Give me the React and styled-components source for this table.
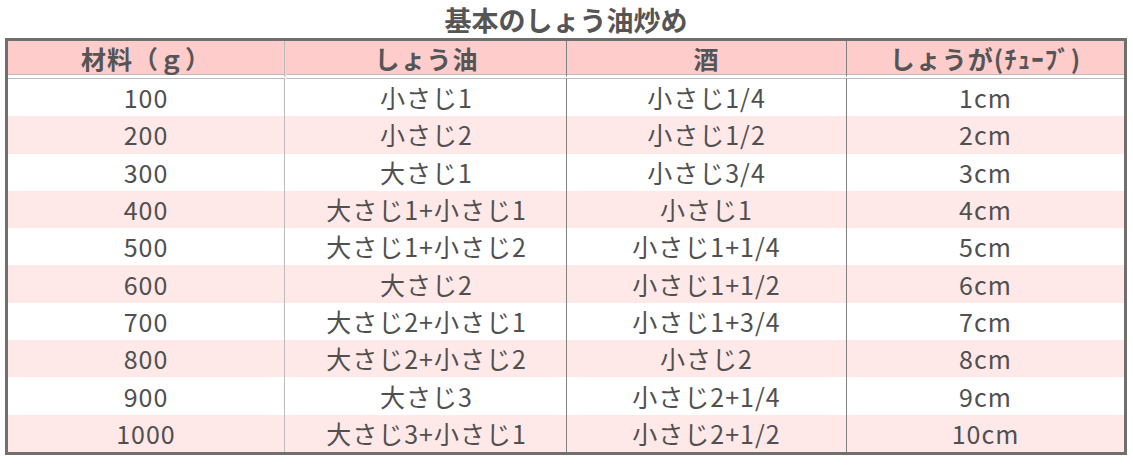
import React from "react";
import styled, { createGlobalStyle } from "styled-components";

const GlobalStyle = createGlobalStyle`
  body {
    margin: 0;
    background: #fff;
    font-family: "Noto Sans CJK JP", "Noto Sans", sans-serif;
    color: #555;
  }
`;

const Wrap = styled.div`
  width: 1122px;
  padding-left: 5px;
`;

const Title = styled.h2`
  margin: 0;
  height: 38px;
  line-height: 40px;
  text-align: center;
  font-size: 27px;
  font-weight: 700;
  color: #555;
`;

const Table = styled.table`
  width: 1122px;
  table-layout: fixed;
  border-collapse: separate;
  border-spacing: 0;
  border: 3px solid #6f6f6f;
`;

const Th = styled.th`
  height: 34px;
  padding: 0;
  background: #ffcccc;
  font-size: 25px;
  font-weight: 700;
  letter-spacing: 1px;
  color: #555;
  border-bottom: 3px solid #fff;
  box-shadow: inset 0 -1px 0 #bbb;
  line-height: 34px;
  white-space: nowrap;
  ${(p) => cellLines(p.col)}
`;

const Row = styled.tr`
  background: ${(p) => (p.even ? "#ffe8e8" : "#fff")};
`;

const Td = styled.td`
  height: 37.3px;
  padding: 0;
  text-align: center;
  font-size: 25px;
  letter-spacing: 1px;
  line-height: 37px;
  color: #505050;
  white-space: nowrap;
  ${(p) => (p.first ? "border-top: 1px solid #bbb;" : "")}
  ${(p) => cellLines(p.col)}
`;

function cellLines(col) {
  if (col === 0) return "border-right: 1px solid #bbb;";
  if (col === 1)
    return "border-left: 2px solid transparent; border-right: 1px solid #808080;";
  if (col === 2) return "border-right: 1px solid #808080;";
  return "";
}

const Col = styled.col`
  width: ${(p) => p.w}px;
`;

const rows = [
  ["100", "小さじ1", "小さじ1/4", "1cm"],
  ["200", "小さじ2", "小さじ1/2", "2cm"],
  ["300", "大さじ1", "小さじ3/4", "3cm"],
  ["400", "大さじ1+小さじ1", "小さじ1", "4cm"],
  ["500", "大さじ1+小さじ2", "小さじ1+1/4", "5cm"],
  ["600", "大さじ2", "小さじ1+1/2", "6cm"],
  ["700", "大さじ2+小さじ1", "小さじ1+3/4", "7cm"],
  ["800", "大さじ2+小さじ2", "小さじ2", "8cm"],
  ["900", "大さじ3", "小さじ2+1/4", "9cm"],
  ["1000", "大さじ3+小さじ1", "小さじ2+1/2", "10cm"],
];

const heads = ["材料（ｇ）", "しょう油", "酒", "しょうが(ﾁｭｰﾌﾞ)"];

export default function App() {
  return (
    <>
      <GlobalStyle />
      <Wrap>
        <Title>基本のしょう油炒め</Title>
        <Table>
          <colgroup>
            <Col w={277} />
            <Col w={282} />
            <Col w={280} />
            <Col w={277} />
          </colgroup>
          <thead>
            <tr>
              {heads.map((h, i) => (
                <Th key={h} col={i}>
                  {h}
                </Th>
              ))}
            </tr>
          </thead>
          <tbody>
            {rows.map((r, ri) => (
              <Row key={r[0]} even={ri % 2 === 1}>
                {r.map((c, ci) => (
                  <Td key={ci} col={ci} first={ri === 0}>
                    {c}
                  </Td>
                ))}
              </Row>
            ))}
          </tbody>
        </Table>
      </Wrap>
    </>
  );
}
